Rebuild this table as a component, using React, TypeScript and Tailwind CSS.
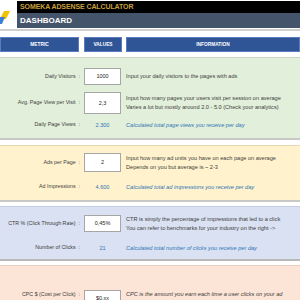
import React from "react";

const font = { fontFamily: '"Liberation Sans", Arial, sans-serif' };

function Label({ children }: { children: React.ReactNode }) {
  return (
    <div className="w-[82px] shrink-0 pr-[2px] text-right text-[5.3px] text-[#404040] whitespace-nowrap">
      {children}
    </div>
  );
}

function InputBox({ v, h = "h-[17px]" }: { v: string; h?: string }) {
  return (
    <div className={`ml-[2px] w-[37px] ${h} shrink-0 bg-white border border-[#a6a6a6] flex items-center justify-center text-[5.5px] text-[#262626]`}>
      {v}
    </div>
  );
}

function Calc({ v }: { v: string }) {
  return (
    <div className="ml-[2px] w-[37px] shrink-0 text-center text-[5.5px] text-[#2e75b6]">{v}</div>
  );
}

function Info({ lines, calc }: { lines: string[]; calc?: boolean }) {
  return (
    <div
      className={`ml-[5px] flex flex-col text-[5.6px] leading-[9px] whitespace-nowrap ${
        calc ? "italic text-[#2e75b6]" : "text-[#404040]"
      }`}
    >
      {lines.map((l) => (
        <span key={l}>{l}</span>
      ))}
    </div>
  );
}

export default function App() {
  return (
    <div className="w-[300px] h-[300px] overflow-hidden bg-white" style={font}>
      {/* Header */}
      <div className="flex h-[29px] pt-[1px]">
        <div className="w-[17px] shrink-0 relative bg-white">
          <svg width="17" height="28" viewBox="0 0 17 28" className="absolute left-0 top-0">
            <polygon points="4,10 10,10 6,18 0,18" fill="#f2c200" />
            <polygon points="0,16 5,16 2,23 0,23" fill="#3d7fd6" />
          </svg>
        </div>
        <div className="flex-1 flex flex-col">
          <div className="h-[12px] bg-black flex items-center pl-[3px] text-[7px] font-bold text-[#c9a03a] tracking-[-0.1px]">
            SOMEKA ADSENSE CALCULATOR
          </div>
          <div className="h-[15px] bg-[#44546a] flex items-center pl-[3px] text-[8px] font-bold text-white">
            DASHBOARD
          </div>
        </div>
      </div>
      <div className="h-[2px] bg-[#d0d0d0]" />
      <div className="h-[6px]" />
      {/* Table header */}
      <div className="flex h-[15px] text-[4.8px] font-bold text-white">
        <div className="w-[79px] bg-[#2f5597] border border-[#5a7cc0] flex items-center justify-center">METRIC</div>
        <div className="ml-[5px] w-[38px] bg-[#2f5597] border border-[#5a7cc0] flex items-center justify-center">VALUES</div>
        <div className="ml-[4px] flex-1 bg-[#2f5597] border border-[#5a7cc0] flex items-center justify-center">INFORMATION</div>
      </div>
      <div className="h-[5px]" />
      {/* Green */}
      <div className="bg-[#e2efda] border-t border-[#c9d6c1] border-b-2 border-b-[#c8c8c8] pt-[10px] pb-[7px] flex flex-col">
        <div className="flex items-center h-[17px]">
          <Label>Daily Visitors&nbsp;&nbsp;:</Label>
          <InputBox v="1000" />
          <Info lines={["Input your daily visitors to the pages with ads"]} />
        </div>
        <div className="flex items-center h-[22px] mt-[7px]">
          <Label>Avg. Page View per Visit&nbsp;&nbsp;:</Label>
          <InputBox v="2,3" h="h-[22px]" />
          <Info
            lines={[
              "Input how many pages your users visit per session on average",
              "Varies a lot but mostly around 2.0 - 5.0 (Check your analytics)",
            ]}
          />
        </div>
        <div className="flex items-center h-[12px] mt-[5px]">
          <Label>Daily Page Views&nbsp;&nbsp;:</Label>
          <Calc v="2.300" />
          <Info calc lines={["Calculated total page views you receive per day"]} />
        </div>
      </div>
      <div className="h-[5px]" />
      {/* Yellow */}
      <div className="bg-[#fff2cc] border-t border-[#e6d9b0] border-b-2 border-b-[#c8c8c8] pt-[7px] pb-[7px] flex flex-col">
        <div className="flex items-center h-[19px]">
          <Label>Ads per Page&nbsp;&nbsp;:</Label>
          <InputBox v="2" h="h-[19px]" />
          <Info
            lines={[
              "Input how many ad units you have on each page on average",
              "Depends on you but average is ~ 2-3",
            ]}
          />
        </div>
        <div className="flex items-center h-[12px] mt-[9px]">
          <Label>Ad Impressions&nbsp;&nbsp;:</Label>
          <Calc v="4.600" />
          <Info calc lines={["Calculated total ad impressions you receive per day"]} />
        </div>
      </div>
      <div className="h-[4px]" />
      {/* Blue */}
      <div className="bg-[#d9e1f2] border-t border-[#c3cbe0] border-b-2 border-b-[#b8b8b8] pt-[8px] pb-[5px] flex flex-col">
        <div className="flex items-center h-[17px]">
          <Label>CTR % (Click Through Rate)&nbsp;&nbsp;:</Label>
          <InputBox v="0,45%" />
          <Info
            lines={[
              "CTR is simply the percentage of impressions that led to a click",
              "You can refer to benchmarks for your industry on the right ->",
            ]}
          />
        </div>
        <div className="flex items-center h-[12px] mt-[10px]">
          <Label>Number of Clicks&nbsp;&nbsp;:</Label>
          <Calc v="21" />
          <Info calc lines={["Calculated total number of clicks you receive per day"]} />
        </div>
      </div>
      <div className="h-[4px]" />
      {/* Peach */}
      <div className="bg-[#fce4d6] border-t border-[#e8cfc0] pt-[24px] flex flex-col h-[40px]">
        <div className="flex items-start h-[17px]">
          <Label>
            <span className="relative top-[1px]">CPC $ (Cost per Click)&nbsp;&nbsp;:</span>
          </Label>
          <InputBox v="$0.xx" />
          <div className="ml-[5px] text-[5.6px] leading-[9px] italic text-[#404040] whitespace-nowrap">
            CPC is the amount you earn each time a user clicks on your ad
          </div>
        </div>
      </div>
    </div>
  );
}
